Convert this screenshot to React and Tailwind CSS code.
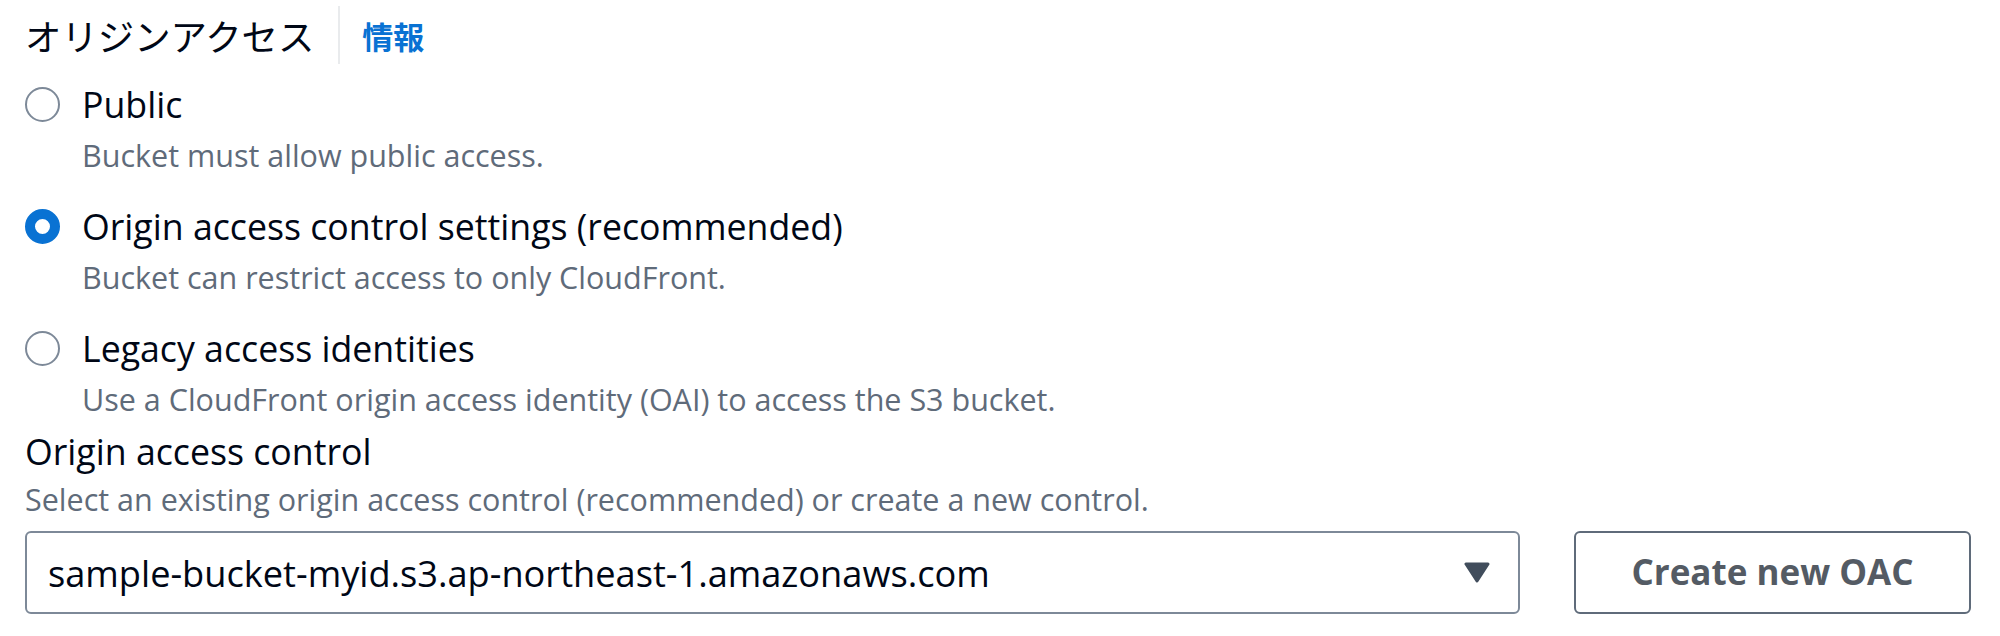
const options = [
  { id: "public", label: "Public", desc: "Bucket must allow public access." },
  { id: "oac", label: "Origin access control settings (recommended)", desc: "Bucket can restrict access to only CloudFront." },
  { id: "legacy", label: "Legacy access identities", desc: "Use a CloudFront origin access identity (OAI) to access the S3 bucket." },
];

function Radio({ checked }) {
  if (checked) {
    return <span className="block w-[35px] h-[35px] rounded-full border-[10px] border-[#0972d3] bg-white" />;
  }
  return <span className="block w-[35px] h-[35px] rounded-full border-[2.5px] border-[#7d8998] bg-white" />;
}

export default function App() {
  const selected = "oac";

  return (
    <div className="w-[2000px] h-[636px] bg-white pl-[25px] pr-[29px] font-['Open_Sans','Noto_Sans_CJK_JP',sans-serif] text-[#000716]">
      {/* header */}
      <div className="flex items-center h-[68px] pt-[2px]">
        <span className="text-[36.4px] leading-none font-normal font-['Noto_Sans_CJK_JP',sans-serif]">オリジンアクセス</span>
        <span className="ml-[24px] w-[2px] h-[58px] bg-[#e9ebed]" />
        <a className="ml-[22px] text-[31px] leading-none font-bold text-[#0972d3] font-['Noto_Sans_CJK_JP',sans-serif]">情報</a>
      </div>

      {/* radio group */}
      <div className="mt-[10px] flex flex-col gap-[23px]">
        {options.map((o) => (
          <div key={o.id} className="flex gap-[22px]">
            <div className="h-[52px] flex items-center">
              <Radio checked={o.id === selected} />
            </div>
            <div className="flex flex-col">
              <span className="text-[35.7px] leading-[52px]">{o.label}</span>
              <span className="pt-[3px] text-[30.5px] leading-[44px] text-[#5f6b7a]">{o.desc}</span>
            </div>
          </div>
        ))}
      </div>

      {/* origin access control */}
      <div className="mt-[4px] flex flex-col">
        <span className="text-[35.7px] leading-[52px]">Origin access control</span>
        <span className="text-[30.5px] leading-[44px] text-[#5f6b7a]">
          Select an existing origin access control (recommended) or create a new control.
        </span>
      </div>

      <div className="mt-[10px] flex gap-[54px]">
        <div className="flex-1 h-[83px] rounded-[6px] border-2 border-[#7d8998] flex items-center pl-[21px] pr-[28px]">
          <span className="flex-1 text-[36.2px] pt-[1px]">sample-bucket-myid.s3.ap-northeast-1.amazonaws.com</span>
          <svg width="26" height="21" viewBox="0 0 26 21">
            <path d="M2 2 L24 2 L13 19 Z" fill="#414d5c" stroke="#414d5c" strokeWidth="3" strokeLinejoin="round" />
          </svg>
        </div>
        <button className="w-[397px] h-[83px] rounded-[6px] border-2 border-[#5f6b7a] bg-white text-[35px] font-bold text-[#545b64]">
          Create new OAC
        </button>
      </div>
    </div>
  );
}
